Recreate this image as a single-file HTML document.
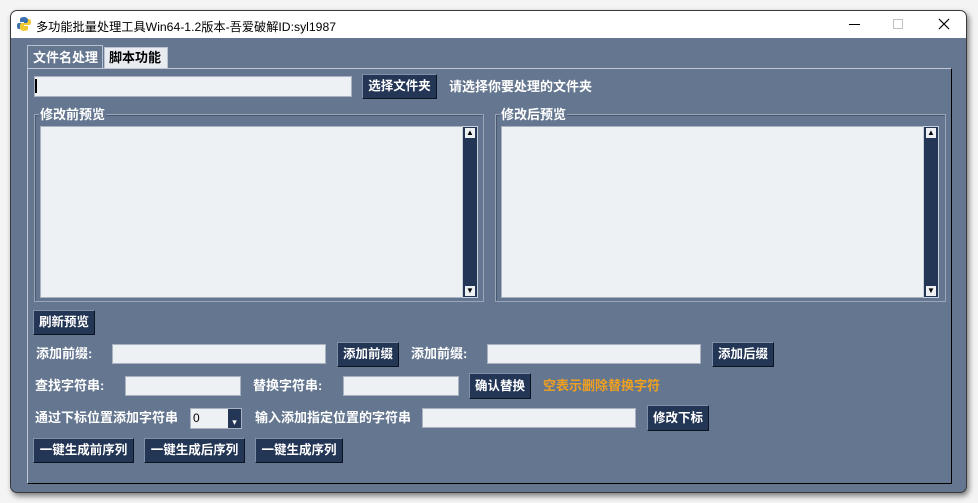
<!DOCTYPE html>
<html><head><meta charset="utf-8"><style>
*{margin:0;padding:0;box-sizing:border-box}
body{width:978px;height:503px;background:#fff;position:relative;overflow:hidden;font-family:"Liberation Sans","Noto Sans CJK SC",sans-serif}
.a{position:absolute}
.win{left:10px;top:10px;width:957px;height:483px;background:#657790;border:1px solid #3a3a3a;border-radius:7px;box-shadow:2px 3px 6px rgba(0,0,0,.5);overflow:hidden}
.title{left:0;top:0;width:100%;height:27px;background:#fff}
.t{font-size:13px;font-weight:bold;color:#fff;white-space:nowrap;line-height:14px}
.inp{background:#eef1f4;border:1px solid #a8b2c0}
.btn{background:#243656;border:1px solid #0c1424;border-top-color:#8090a8;border-left-color:#8090a8;color:#fff;font-size:12.5px;font-weight:bold;text-align:center;white-space:nowrap}
.grp{border:1px solid #9aa6b8;box-shadow:inset 1px 1px 0 #4a5870}
.sb{background:#243656;border:1px solid #c8d0dc}
.arr{position:absolute;left:2px;width:10px;height:10px;background:#eef1f4;color:#000;font-size:8px;text-align:center;line-height:10px}
</style></head><body>
<div class="a" style="left:0;top:0;width:978px;height:503px;background:#f4f4f4"></div>
<div class="a win">
 <div class="a title">
  <svg class="a" style="left:5px;top:5px" width="16" height="16" viewBox="0 0 16 16"><path d="M8 1C4 1 4 3 4 4v2h4v1H3C1 7 1 9 1 10s0 3 2 3h1v-2c0-1 1-2 2-2h4c1 0 2-1 2-2V4c0-1-1-3-4-3z" fill="#3a70b0"/><path d="M8 15c4 0 4-2 4-3v-2H8V9h5c2 0 2-2 2-3s0-3-2-3h-1v2c0 1-1 2-2 2H6c-1 0-2 1-2 2v3c0 1 1 3 4 3z" fill="#f0c830"/></svg>
  <div class="a" style="left:25px;top:6px;font-size:12.2px;color:#000;white-space:nowrap">多功能批量处理工具Win64-1.2版本-吾爱破解ID:syl1987</div>
  <div class="a" style="left:838px;top:13px;width:11px;height:1px;background:#000"></div>
  <div class="a" style="left:882px;top:8px;width:10px;height:10px;border:1px solid #c0c0c0"></div>
  <svg class="a" style="left:927px;top:7px" width="12" height="12"><path d="M1 1L11 11M11 1L1 11" stroke="#000" stroke-width="1.2"/></svg>
 </div>
</div>
<div class="a" style="left:27px;top:45px;width:76px;height:24px;border:1px solid #b8c2d0;border-bottom:none;background:#657790"></div>
<div class="a t" style="left:33px;top:51px">文件名处理</div>
<div class="a" style="left:104px;top:47px;width:64px;height:21px;background:#e8ecf0;border:1px solid #b8c2d0;border-bottom:none"></div>
<div class="a t" style="left:109px;top:51px;color:#000">脚本功能</div>
<div class="a" style="left:27px;top:68px;width:925px;height:416px;border:1px solid #000;border-top-color:#c0c8d4;border-left-color:#c0c8d4"></div>
<div class="a inp" style="left:34px;top:76px;width:318px;height:21px"></div>
<div class="a" style="left:35px;top:79px;width:2px;height:14px;background:#000"></div>
<div class="a btn" style="left:362px;top:74px;width:75px;height:25px;line-height:23px">选择文件夹</div>
<div class="a t" style="left:449px;top:80px">请选择你要处理的文件夹</div>
<div class="a grp" style="left:34px;top:114px;width:450px;height:188px"></div>
<div class="a t" style="left:39px;top:108px;background:#657790;padding:0 1px">修改前预览</div>
<div class="a inp" style="left:40px;top:126px;width:423px;height:172px"></div>
<div class="a sb" style="left:462px;top:126px;width:16px;height:172px"><div class="arr" style="top:1px">▲</div><div class="arr" style="bottom:1px">▼</div></div>
<div class="a grp" style="left:495px;top:114px;width:451px;height:188px"></div>
<div class="a t" style="left:500px;top:108px;background:#657790;padding:0 1px">修改后预览</div>
<div class="a inp" style="left:501px;top:126px;width:423px;height:172px"></div>
<div class="a sb" style="left:923px;top:126px;width:16px;height:172px"><div class="arr" style="top:1px">▲</div><div class="arr" style="bottom:1px">▼</div></div>
<div class="a btn" style="left:33px;top:310px;width:62px;height:25px;line-height:23px">刷新预览</div>
<div class="a t" style="left:36px;top:347px">添加前缀:</div>
<div class="a inp" style="left:112px;top:344px;width:214px;height:20px"></div>
<div class="a btn" style="left:337px;top:342px;width:62px;height:25px;line-height:23px">添加前缀</div>
<div class="a t" style="left:411px;top:347px">添加前缀:</div>
<div class="a inp" style="left:487px;top:344px;width:214px;height:20px"></div>
<div class="a btn" style="left:712px;top:342px;width:62px;height:25px;line-height:23px">添加后缀</div>
<div class="a t" style="left:35px;top:379px">查找字符串:</div>
<div class="a inp" style="left:125px;top:376px;width:116px;height:20px"></div>
<div class="a t" style="left:253px;top:379px">替换字符串:</div>
<div class="a inp" style="left:343px;top:376px;width:116px;height:20px"></div>
<div class="a btn" style="left:469px;top:373px;width:62px;height:26px;line-height:24px">确认替换</div>
<div class="a t" style="left:543px;top:379px;color:#f0a020">空表示删除替换字符</div>
<div class="a t" style="left:35px;top:411px">通过下标位置添加字符串</div>
<div class="a inp" style="left:190px;top:408px;width:52px;height:21px;font-size:12px;line-height:18px;padding-left:2px;color:#000">0</div>
<div class="a" style="left:228px;top:409px;width:13px;height:19px;background:#243656;color:#fff;font-size:9px;text-align:center;line-height:26px">▾</div>
<div class="a t" style="left:255px;top:411px">输入添加指定位置的字符串</div>
<div class="a inp" style="left:422px;top:408px;width:214px;height:20px"></div>
<div class="a btn" style="left:647px;top:405px;width:62px;height:26px;line-height:24px">修改下标</div>
<div class="a btn" style="left:33px;top:438px;width:101px;height:25px;line-height:23px">一键生成前序列</div>
<div class="a btn" style="left:144px;top:438px;width:101px;height:25px;line-height:23px">一键生成后序列</div>
<div class="a btn" style="left:255px;top:438px;width:88px;height:25px;line-height:23px">一键生成序列</div>
</body></html>
